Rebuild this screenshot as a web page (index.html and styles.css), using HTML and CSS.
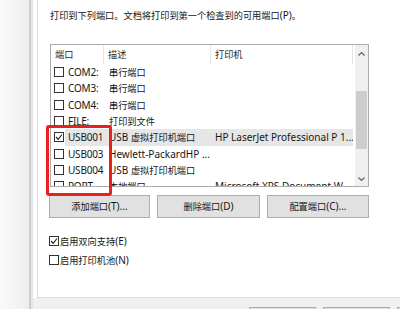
FILE: index.html
```html
<!DOCTYPE html>
<html lang="zh-CN">
<head>
    <meta charset="UTF-8">
    <title>端口</title>
    <link rel="stylesheet" href="styles.css">
</head>
<body>
    <div class="backdrop"></div>
    <div class="frame"></div>
    <div class="window">
        <div class="page">
            <div class="page-inner">
                <p class="intro"><span class="cn">打印到下列端口。文档将打印到第一个检查到的可用端口</span>(P)<span class="cn">。</span></p>

                <div class="ports">
                    <div class="list">
                        <div class="head">
                            <div class="col c1"><span class="cn">端口</span></div>
                            <div class="col c2"><span class="cn">描述</span></div>
                            <div class="col c3"><span class="cn">打印机</span></div>
                        </div>
                        <div class="row">
                            <div class="col c1"><span class="box"></span><span class="name">COM2:</span></div>
                            <div class="col c2"><span class="cn">串行端口</span></div>
                            <div class="col c3"></div>
                        </div>
                        <div class="row">
                            <div class="col c1"><span class="box"></span><span class="name">COM3:</span></div>
                            <div class="col c2"><span class="cn">串行端口</span></div>
                            <div class="col c3"></div>
                        </div>
                        <div class="row">
                            <div class="col c1"><span class="box"></span><span class="name">COM4:</span></div>
                            <div class="col c2"><span class="cn">串行端口</span></div>
                            <div class="col c3"></div>
                        </div>
                        <div class="row">
                            <div class="col c1"><span class="box"></span><span class="name">FILE:</span></div>
                            <div class="col c2"><span class="cn">打印到文件</span></div>
                            <div class="col c3"></div>
                        </div>
                        <div class="row sel">
                            <div class="col c1"><span class="box"><svg viewBox="0 0 8 8" width="8" height="8"><polyline points="1,4 3.2,6.3 7,1.5" fill="none" stroke="#222" stroke-width="1.1"/></svg></span><span class="name">USB001</span></div>
                            <div class="col c2">USB <span class="cn">虚拟打印机端口</span></div>
                            <div class="col c3">HP LaserJet Professional P 1...</div>
                        </div>
                        <div class="row">
                            <div class="col c1"><span class="box"></span><span class="name">USB003</span></div>
                            <div class="col c2">Hewlett-PackardHP ...</div>
                            <div class="col c3"></div>
                        </div>
                        <div class="row">
                            <div class="col c1"><span class="box"></span><span class="name">USB004</span></div>
                            <div class="col c2">USB <span class="cn">虚拟打印机端口</span></div>
                            <div class="col c3"></div>
                        </div>
                        <div class="row">
                            <div class="col c1"><span class="box"></span><span class="name">PORT</span></div>
                            <div class="col c2"><span class="cn">本地端口</span></div>
                            <div class="col c3">Microsoft XPS Document W...</div>
                        </div>
                    </div>
                    <div class="scrollbar">
                        <div class="arrow"><svg width="7" height="4" viewBox="0 0 7 4"><polyline points="0.5,3.5 3.5,0.6 6.5,3.5" fill="none" stroke="#606060" stroke-width="1.2"/></svg></div>
                        <div class="thumb"></div>
                        <div class="arrow down"><svg width="7" height="4" viewBox="0 0 7 4"><polyline points="0.5,0.5 3.5,3.4 6.5,0.5" fill="none" stroke="#606060" stroke-width="1.2"/></svg></div>
                    </div>
                </div>

                <div class="actions">
                    <button class="btn btn-add"><span class="cn">添加端口</span>(T)...</button>
                    <button class="btn btn-del"><span class="cn">删除端口</span>(D)</button>
                    <button class="btn btn-cfg"><span class="cn">配置端口</span>(C)...</button>
                </div>

                <label class="opt first"><span class="box"><svg viewBox="0 0 8 8" width="8" height="8"><polyline points="1,4 3.2,6.3 7,1.5" fill="none" stroke="#222" stroke-width="1.1"/></svg></span><span class="cn">启用双向支持</span>(E)</label>
                <label class="opt"><span class="box"></span><span class="cn">启用打印机池</span>(N)</label>
            </div>
        </div>
        <div class="footer">
            <button class="btn btn-foot"></button>
            <button class="btn btn-foot"></button>
            <button class="btn btn-foot"></button>
        </div>
    </div>

    <div class="mark"></div>
</body>
</html>
```

FILE: styles.css
```css
* {
    box-sizing: border-box;
}

body {
    margin: 0;
    width: 400px;
    height: 309px;
    overflow: hidden;
    display: flex;
    background: #f0f0f0;
    font-family: "Noto Sans", "Noto Sans CJK SC", sans-serif;
    font-size: 10px;
    color: #161616;
}

.cn {
    font-size: 9.2px;
}

.backdrop {
    width: 29px;
    flex: none;
    background: linear-gradient(to right, #fafafa, #eeeeee);
}

.frame {
    width: 4px;
    flex: none;
    background: linear-gradient(to right, #cdcdcd 0 2px, #e4e4e4 2px);
}

.window {
    flex: 1;
    min-width: 0;
    display: flex;
    flex-direction: column;
    overflow: hidden;
}

.page {
    height: 298px;
    flex: none;
    background: #fff;
    padding-left: 4px;
}

.page-inner {
    height: 100%;
    border-left: 1px solid #dadada;
    border-bottom: 1px solid #dadada;
    padding: 8px 0 0 12px;
}

.intro {
    margin: 0;
    line-height: 14px;
    white-space: nowrap;
}

.ports {
    margin-top: 21px;
    width: 319px;
    height: 143px;
    border: 1px solid #acacac;
    display: flex;
}

.list {
    width: 304px;
    overflow: hidden;
}

.head {
    display: flex;
    height: 19px;
    line-height: 19px;
    color: #2a2a2a;
}

.head .col {
    border-right: 1px solid #e5e5e5;
    padding-left: 4px;
}

.c1 { width: 53px; flex: none; }
.c2 { width: 107px; flex: none; }
.c3 { width: 142px; flex: none; }

.row {
    display: flex;
    height: 16.33px;
    line-height: 16.33px;
    white-space: nowrap;
}

.row .c1 {
    display: flex;
    align-items: center;
    padding-left: 3px;
    overflow: hidden;
}

.row .c2 {
    padding-left: 5px;
    overflow: hidden;
}

.row .c3 {
    padding-left: 4px;
    overflow: hidden;
}

.name {
    flex: 1;
    min-width: 0;
    overflow: hidden;
    margin-left: 1px;
    padding-left: 3px;
    height: 100%;
    letter-spacing: -0.2px;
}

.row.sel .name,
.row.sel .c2,
.row.sel .c3 {
    background: #e6e6e6;
}

.box {
    width: 10px;
    height: 10px;
    flex: none;
    border: 1px solid #333;
    background: #fff;
    display: flex;
    align-items: center;
    justify-content: center;
}

.scrollbar {
    width: 13px;
    background: #f0f0f0;
    display: flex;
    flex-direction: column;
    align-items: center;
}

.arrow {
    width: 100%;
    height: 17px;
    display: flex;
    align-items: center;
    justify-content: center;
}

.arrow.down {
    margin-top: auto;
    height: 14px;
}

.thumb {
    width: 11px;
    height: 58px;
    margin-top: 29px;
    background: #cdcdcd;
}

.actions {
    display: flex;
    gap: 7px;
    margin: 8px 0 0 -1px;
}

.btn {
    height: 23px;
    padding: 0;
    border: 1px solid #adadad;
    background: #e1e1e1;
    font: inherit;
    color: inherit;
    line-height: 21px;
}

.btn-add { width: 101px; }
.btn-del { width: 103px; }
.btn-cfg { width: 102px; }

.opt {
    display: flex;
    align-items: center;
    height: 19px;
    margin-left: -1px;
    white-space: nowrap;
}

.opt.first {
    margin-top: 13px;
}

.opt .box {
    margin-right: 1px;
}

.footer {
    flex: 1;
    display: flex;
    gap: 7px;
    padding: 9px 0 0 216px;
    background: #f0f0f0;
}

.btn-foot {
    width: 67px;
    flex: none;
}

.mark {
    position: absolute;
    left: 46px;
    top: 125px;
    width: 66px;
    height: 71px;
    border: 3px solid #e6221d;
    border-radius: 3px;
}
```
